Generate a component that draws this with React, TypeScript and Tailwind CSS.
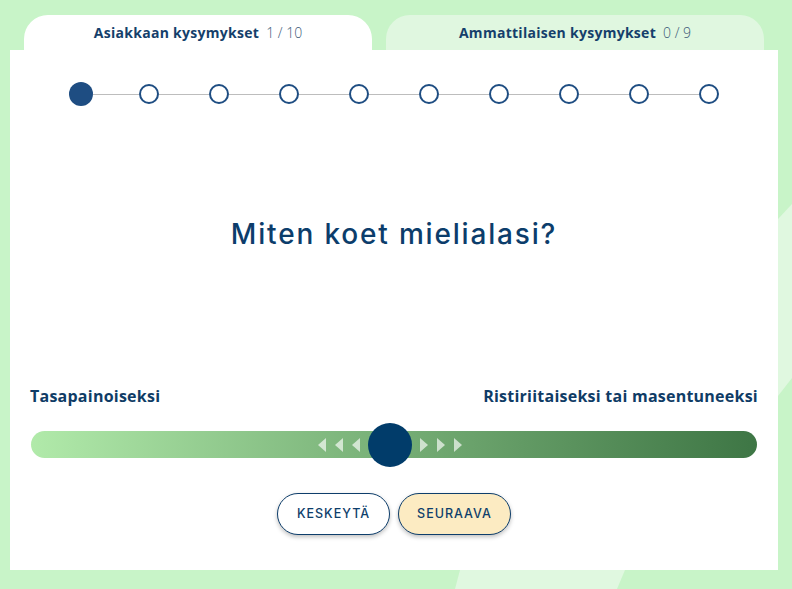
const steps = Array.from({ length: 10 }, (_, i) => i);

const Arrow = ({ dir }: { dir: "left" | "right" }) => (
    <svg width="8" height="14" viewBox="0 0 8 14" className="shrink-0">
        {dir === "left" ? (
            <polygon points="8,0 8,14 0,7" fill="#ffffff" fillOpacity="0.65" />
        ) : (
            <polygon points="0,0 0,14 8,7" fill="#ffffff" fillOpacity="0.65" />
        )}
    </svg>
);

export default function App() {
    return (
        <div
            className="relative h-[589px] w-[792px] overflow-hidden bg-[#c8f4c8]"
            style={{ fontFamily: "'Open Sans', Inter, sans-serif" }}
        >
            {/* decorative light bands */}
            <svg className="pointer-events-none absolute inset-0" width="792" height="589" viewBox="0 0 792 589">
                <polygon points="778,219 792,204 792,378 778,396" fill="#e0f8e0" />
                <polygon points="460,570 625,570 617,589 455,589" fill="#e0f8e0" />
            </svg>

            <div className="relative flex flex-col px-[10px] pt-[15px]">
                {/* tabs */}
                <div className="ml-[14px] flex gap-[14px]">
                    <div className="flex h-[35px] w-[348px] items-center justify-center gap-[7px] rounded-t-[24px] bg-white">
                        <span className="text-[14px] font-bold tracking-[0.02em] text-[#153f6b]">Asiakkaan kysymykset</span>
                        <span className="text-[14px] font-light text-[#3b5877]">1 / 10</span>
                    </div>
                    <div className="flex h-[35px] w-[378px] items-center justify-center gap-[7px] rounded-t-[24px] bg-[#e0f7e0]">
                        <span className="text-[14px] font-bold tracking-[0.02em] text-[#153f6b]">Ammattilaisen kysymykset</span>
                        <span className="text-[14px] font-light text-[#3b5877]">0 / 9</span>
                    </div>
                </div>

                {/* card */}
                <div className="flex h-[520px] w-[768px] flex-col items-center bg-white">
                    {/* stepper */}
                    <div className="mt-[32px] flex items-center">
                        {steps.map((i) => (
                            <div key={i} className="flex items-center">
                                {i > 0 && <div className={`h-px bg-[#bdbdbd] ${i === 1 ? "w-[46px]" : "w-[50px]"}`} />}
                                {i === 0 ? (
                                    <div className="h-[24px] w-[24px] rounded-full bg-[#1e4d82]" />
                                ) : (
                                    <div className="h-[20px] w-[20px] rounded-full border-[2.5px] border-[#1e4d82] bg-white" />
                                )}
                            </div>
                        ))}
                    </div>

                    {/* question */}
                    <h1 className="mt-[110px] font-['Inter'] text-[28px] font-medium leading-[36px] tracking-[0.065em] text-[#0c3d6b]">
                        Miten koet mielialasi?
                    </h1>

                    {/* labels */}
                    <div className="mt-[132px] flex w-full justify-between px-[20px]">
                        <span className="text-[16px] font-bold tracking-[0.015em] text-[#0f3c66]">Tasapainoiseksi</span>
                        <span className="text-[16px] font-bold tracking-[0.015em] text-[#0f3c66]">Ristiriitaiseksi tai masentuneeksi</span>
                    </div>

                    {/* slider */}
                    <div className="relative mt-[23px] h-[27px] w-[726px] rounded-full bg-linear-to-r from-[#b1eaaa] to-[#3e7645]">
                        <div className="absolute inset-0 flex items-center justify-center pr-[8px]">
                            <div className="flex items-center gap-[9px]">
                                <Arrow dir="left" />
                                <Arrow dir="left" />
                                <Arrow dir="left" />
                            </div>
                            <div className="mx-[8px] h-[44px] w-[44px] shrink-0 rounded-full bg-[#013c6a]" />
                            <div className="flex items-center gap-[9px]">
                                <Arrow dir="right" />
                                <Arrow dir="right" />
                                <Arrow dir="right" />
                            </div>
                        </div>
                    </div>

                    {/* buttons */}
                    <div className="mt-[35px] flex gap-[8px]">
                        <button className="h-[42px] w-[113px] rounded-full border-[1.5px] border-[#0e3e6b] bg-white font-['Inter'] text-[12.5px] font-medium tracking-[0.08em] text-[#0e3e6b] shadow-[0_2px_4px_rgba(0,0,0,0.25)]">
                            KESKEYTÄ
                        </button>
                        <button className="h-[42px] w-[113px] rounded-full border-[1.5px] border-[#0e3e6b] bg-[#fcebc2] font-['Inter'] text-[12.5px] font-medium tracking-[0.08em] text-[#0e3e6b] shadow-[0_2px_4px_rgba(0,0,0,0.25)]">
                            SEURAAVA
                        </button>
                    </div>
                </div>
            </div>
        </div>
    );
}
